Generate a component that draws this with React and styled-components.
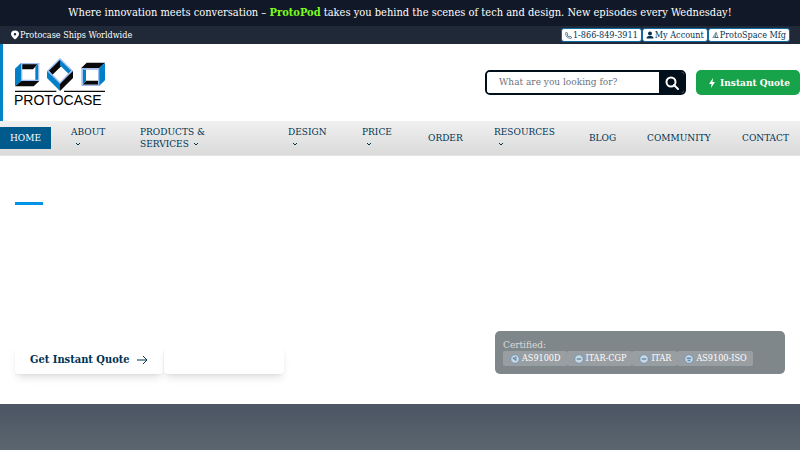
import React from "react";
import styled, { createGlobalStyle } from "styled-components";

const colors = {
  ink: "#111827",
  slate: "#1f2937",
  navy: "#003352",
  blue: "#0284c7",
  linkBlue: "#005a8c",
  accent: "#0094e8",
  lime: "#7cfc1e",
  green: "#16a34a",
  search: "#000f1a",
  white: "#ffffff",
};

const navItems = [
  { lines: ["HOME"], active: true },
  { lines: ["ABOUT", ""], menu: true },
  { lines: ["PRODUCTS &", "SERVICES"], menu: true },
  { lines: ["DESIGN", ""], menu: true },
  { lines: ["PRICE", ""], menu: true },
  { lines: ["ORDER"] },
  { lines: ["RESOURCES", ""], menu: true },
  { lines: ["BLOG"] },
  { lines: ["COMMUNITY"] },
  { lines: ["CONTACT"] },
];

const certificates = [
  { name: "AS9100D", mark: "M4 5l5 4M7 4l2 2" },
  { name: "ITAR-CGP", mark: "M4 7h6" },
  { name: "ITAR", mark: "M4 7h6" },
  { name: "AS9100-ISO", mark: "M4 6h6M5 9h4" },
];

function Logo() {
  return (
    <LogoSvg viewBox="0 0 270 147" role="img" aria-label="Protocase">
      <path fill="#0a0a0a" d="M0 85L18 69H73L56 85ZM21 17H69L54 34H21Z" />
      <path fill="#0080c8" d="M0 32L18 15V69L0 85ZM69 17V66H61V27Z" />
      <path fill="none" stroke="#9dbcf0" strokeWidth="4" d="M20 17H71V67H20Z" />
      <path fill="#0080c8" d="M96 38L135 76V99L96 60Z" />
      <path fill="#0a0a0a" d="M174 38L135 76V99L174 60Z" />
      <path fill="#0a0a0a" d="M100 37L135 3L146 17L111 52Z" />
      <path fill="#0080c8" d="M135 3L170 37L161 48L135 22Z" />
      <path fill="none" stroke="#9dbcf0" strokeWidth="4" d="M135 3L171 38L135 75L99 38Z" />
      <path fill="#0a0a0a" d="M198 31L215 14H270L252 31ZM203 80L213 68H250V80Z" />
      <path fill="#0080c8" d="M270 14V67L252 84V31ZM203 34H213V68L203 80Z" />
      <path fill="none" stroke="#9dbcf0" strokeWidth="4" d="M201 33H251V82H201Z" />
      <path stroke="#0a0a0a" strokeWidth="4" d="M0 100H124M147 100H270" />
      <text x="-3" y="142" fontSize="42">PROTOCASE</text>
    </LogoSvg>
  );
}

function App() {
  return (
    <>
      <GlobalStyle />
      <Announcement>
        Where innovation meets conversation – <strong>ProtoPod</strong> takes you
        behind the scenes of tech and design. New episodes every Wednesday!
      </Announcement>
      <TopBar>
        <Shipping>
          <svg width="8" height="10" viewBox="0 0 16 20">
            <path
              fill="#fff"
              fillRule="evenodd"
              d="M8 1a8 7 0 0 0-8 7c0 5 8 11 8 11s8-6 8-11a8 7 0 0 0-8-7zm0 5a2 2 0 1 1 0 5 2 2 0 0 1 0-5z"
            />
          </svg>
          Protocase Ships Worldwide
        </Shipping>
        <TopLinks>
          <TopLink href="#phone">
            <svg width="7" height="7" viewBox="0 0 24 24" fill="none" stroke="currentColor" strokeWidth="2">
              <path d="M22 17v3a2 2 0 0 1-2 2A19 19 0 0 1 2 4a2 2 0 0 1 2-2h3l3 6-3 2a14 14 0 0 0 7 7l2-3z" />
            </svg>
            1-866-849-3911
          </TopLink>
          <TopLink href="#account">
            <svg width="8" height="8" viewBox="0 0 16 16" fill="currentColor">
              <circle cx="8" cy="5" r="4" />
              <path d="M1 15c0-4 3-5 7-5s7 1 7 5z" />
            </svg>
            My Account
          </TopLink>
          <TopLink href="#protospace">
            <svg width="7" height="8" viewBox="0 0 14 16" fill="none" stroke="currentColor">
              <path d="M8 3l4 10H7zM8 3L3 11l5-1M1 13h12" />
            </svg>
            ProtoSpace Mfg
          </TopLink>
        </TopLinks>
      </TopBar>
      <Header>
        <a href="#home">
          <Logo />
        </a>
        <Actions>
          <Search>
            <input type="search" aria-label="Search" placeholder="What are you looking for?" />
            <button type="button" aria-label="Search">
              <svg width="14" height="14" viewBox="0 0 14 14" fill="none" stroke="#fff" strokeWidth="2">
                <circle cx="6" cy="6" r="4.5" />
                <path d="M9 9l4 4" strokeLinecap="round" />
              </svg>
            </button>
          </Search>
          <QuoteButton type="button">
            <svg width="8" height="10" viewBox="0 0 8 10">
              <path fill="#fff" d="M5 0L1 6h2.500L3 10l4-6H4.500z" />
            </svg>
            Instant Quote
          </QuoteButton>
        </Actions>
      </Header>
      <Nav>
        {navItems.map((item) => (
          <NavLink key={item.lines[0]} href="#menu" $active={item.active}>
            {item.lines[0]}
            {item.menu && (
              <>
                <br />
                {item.lines[1]}
                <Chevron viewBox="0 0 6 4">
                  <path d="M1 1l2 2 2-2" />
                </Chevron>
              </>
            )}
          </NavLink>
        ))}
      </Nav>
      <Hero>
        <Accent />
        <HeroRow>
          <HeroButtons>
            <HeroButton type="button">
              Get Instant Quote
              <svg width="12" height="10" viewBox="0 0 12 10" fill="none" stroke="currentColor">
                <path d="M1 5h10M7 1l4 4-4 4" />
              </svg>
            </HeroButton>
            <HeroButton type="button" aria-label="Learn more" />
          </HeroButtons>
          <Certified>
            <p>Certified:</p>
            <ChipList>
              {certificates.map((cert) => (
                <Chip key={cert.name}>
                  <svg width="10" height="10" viewBox="0 0 14 14" fill="none">
                    <circle cx="7" cy="7" r="6" fill="#ccd6de" stroke="#5b8db8" />
                    <path d={cert.mark} stroke="#5b8db8" strokeWidth="2" />
                  </svg>
                  {cert.name}
                </Chip>
              ))}
            </ChipList>
          </Certified>
        </HeroRow>
      </Hero>
      <DarkSection />
    </>
  );
}

const GlobalStyle = createGlobalStyle`
  * {
    box-sizing: border-box;
  }
  body {
    margin: 0;
    background: ${colors.white};
    font-family: "DejaVu Serif Condensed", "DejaVu Serif", serif;
    font-size: 11px;
    line-height: 15px;
  }
  #root {
    display: flex;
    flex-direction: column;
    min-height: 100vh;
  }
  input, button {
    font-family: inherit;
  }
  a {
    color: inherit;
    text-decoration: none;
  }
  p {
    margin: 0;
  }
`;

const Announcement = styled.div`
  padding: 5px 10px 6px;
  color: ${colors.white};
  background: ${colors.ink};
  text-align: center;

  strong {
    color: ${colors.lime};
  }
`;

const TopBar = styled.div`
  display: flex;
  justify-content: space-between;
  align-items: center;
  height: 18px;
  padding: 0 10px;
  color: ${colors.white};
  background: ${colors.slate};
  font-size: 9px;
`;

const Shipping = styled.div`
  display: flex;
  align-items: center;
  gap: 1px;
  padding-left: 1px;
`;

const TopLinks = styled.nav`
  display: flex;
`;

const TopLink = styled.a`
  display: flex;
  align-items: center;
  gap: 1px;
  height: 14px;
  padding: 0 3px;
  border: 1px solid #0c6ba5;
  border-radius: 3px;
  color: ${colors.navy};
  background: ${colors.white};
`;

const Header = styled.header`
  display: flex;
  justify-content: space-between;
  align-items: center;
  height: 77px;
  padding-left: 12px;
  border-left: 3px solid ${colors.blue};
`;

const LogoSvg = styled.svg`
  display: block;
  width: 90px;
  height: 49px;
  overflow: visible;
  font-family: "Liberation Sans", sans-serif;
`;

const Actions = styled.div`
  display: flex;
  gap: 10px;
`;

const Search = styled.form`
  display: flex;
  width: 201px;
  height: 25px;
  overflow: hidden;
  border: 2px solid ${colors.search};
  border-radius: 5px;

  input {
    flex: 1;
    min-width: 0;
    padding: 0 12px 2px;
    border: 0;
    background: ${colors.white};
    font-size: 10px;
  }
  input::placeholder {
    color: #6b7280;
  }
  button {
    display: flex;
    align-items: center;
    justify-content: center;
    width: 25px;
    padding: 0;
    border: 0;
    background: ${colors.search};
  }
`;

const QuoteButton = styled.button`
  display: flex;
  align-items: center;
  gap: 4px;
  height: 25px;
  padding: 0 10px 0 12px;
  border: 0;
  border-radius: 5px;
  color: ${colors.white};
  background: ${colors.green};
  font-size: 10px;
  font-weight: bold;
`;

const Nav = styled.nav`
  display: grid;
  grid-template-columns: 51fr 59fr 138fr 64fr 56fr 56fr 85fr 48fr 85fr 68fr;
  column-gap: 10px;
  align-items: center;
  height: 35px;
  border-bottom: 1px solid #e5e5e5;
  background: linear-gradient(#f0f0f0, #dadada);
`;

const NavLink = styled.a`
  padding: 5px 0 5px 10px;
  color: ${(props) => (props.$active ? colors.white : colors.navy)};
  background: ${(props) => (props.$active ? colors.linkBlue : "transparent")};
  font-size: 10px;
  line-height: 12px;
  white-space: nowrap;
`;

const Chevron = styled.svg`
  width: 6px;
  height: 4px;
  margin-left: 4px;
  vertical-align: 1px;
  fill: none;
  stroke: currentColor;
`;

const Hero = styled.main`
  display: flex;
  flex-direction: column;
  justify-content: space-between;
  height: 248px;
  padding: 46px 15px 30px;
`;

const Accent = styled.div`
  width: 28px;
  height: 3px;
  background: ${colors.accent};
`;

const HeroRow = styled.div`
  display: flex;
  justify-content: space-between;
  align-items: flex-end;
`;

const HeroButtons = styled.div`
  display: flex;
  gap: 1px;
`;

const HeroButton = styled.button`
  display: flex;
  align-items: center;
  gap: 6px;
  min-width: 120px;
  height: 29px;
  padding: 0 15px;
  border: 0;
  border-radius: 4px;
  color: ${colors.navy};
  background: ${colors.white};
  box-shadow: 0 6px 9px -2px rgba(0, 0, 0, 0.1), 0 2px 4px -2px rgba(0, 0, 0, 0.1);
  font-size: 11px;
  font-weight: bold;
`;

const Certified = styled.section`
  width: 290px;
  padding: 7px 8px 8px;
  border-radius: 5px;
  color: #d9dbdc;
  background: #80878b;
  font-size: 10px;
  line-height: 13px;
`;

const ChipList = styled.ul`
  display: flex;
  margin: 0;
  padding: 0;
  list-style: none;
`;

const Chip = styled.li`
  display: flex;
  align-items: center;
  gap: 2px;
  height: 15px;
  padding: 0 6px 0 7px;
  border-radius: 2px;
  color: ${colors.white};
  background: #999ea2;
  font-size: 9px;
`;

const DarkSection = styled.section`
  flex: 1;
  background: linear-gradient(#4b5563, #5b6670);
`;

export default App;
